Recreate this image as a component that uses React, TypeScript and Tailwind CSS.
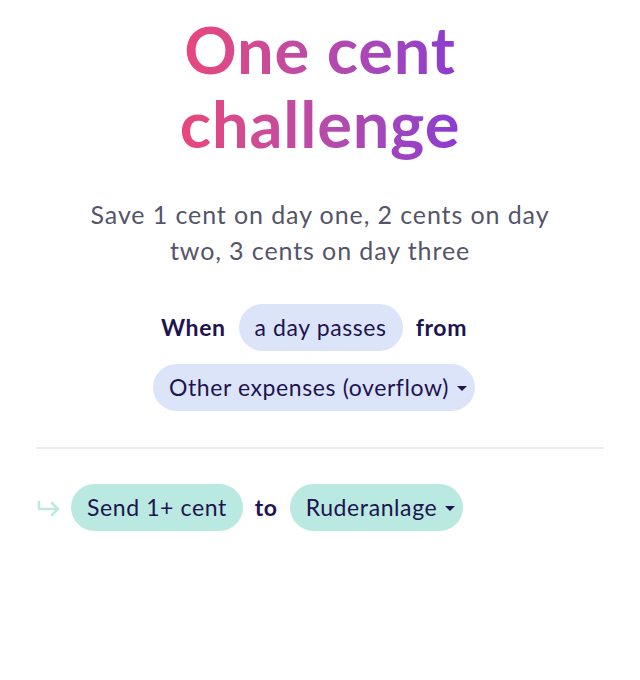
function Caret() {
  return (
    <svg width="10" height="6" viewBox="0 0 10 6" className="ml-2 mt-[2px]">
      <path d="M0 0 L10 0 L5 5 Z" fill="#1e1450" />
    </svg>
  );
}

function FlowArrow() {
  return (
    <svg width="26" height="24" viewBox="0 0 26 24" fill="none" className="-mr-[3px]">
      <path
        d="M3 6v7h19M16 7l6 6-6 6"
        stroke="#bde9e1"
        strokeWidth="2.6"
        strokeLinecap="round"
        strokeLinejoin="round"
      />
    </svg>
  );
}

function Chip({
  children,
  color,
  caret,
}: {
  children: React.ReactNode;
  color: string;
  caret?: boolean;
}) {
  return (
    <span
      className={`inline-flex items-center h-[47px] rounded-full text-[23px] tracking-[0.6px] text-[#1e1450] ${
        caret ? "pl-4 pr-2" : "px-4"
      } ${color}`}
    >
      {children}
      {caret && <Caret />}
    </span>
  );
}

export default function App() {
  return (
    <div
      className="w-[640px] h-[680px] bg-white px-9 pt-[12px]"
      style={{ fontFamily: "Lato, 'Open Sans', sans-serif" }}
    >
      {/* Title */}
      <h1 className="text-center font-bold text-[65px] leading-[74px] tracking-[0.8px]">
        <span className="inline-block bg-gradient-to-r from-[#ec4578] to-[#8a3ad2] bg-clip-text text-transparent px-1">
          One cent
          <br />
          challenge
        </span>
      </h1>

      {/* Description */}
      <p className="mt-[36px] text-center text-[25px] leading-[36px] tracking-[0.9px] text-[#55556a]">
        Save 1 cent on day one, 2 cents on day
        <br />
        two, 3 cents on day three
      </p>

      {/* Trigger */}
      <div className="mt-[36px] mr-[12px] flex flex-col items-center gap-[13px]">
        <div className="flex items-center gap-[13px]">
          <span className="font-bold text-[23px] tracking-[0.6px] text-[#1e1450]">When</span>
          <Chip color="bg-[#dce4fa]">a day passes</Chip>
          <span className="font-bold text-[23px] tracking-[0.6px] text-[#1e1450]">from</span>
        </div>
        <Chip color="bg-[#dce4fa]" caret>
          Other expenses (overflow)
        </Chip>
      </div>

      <div className="mt-[36px] h-[2px] bg-[#eeeef2]" />

      {/* Action */}
      <div className="mt-[35px] flex items-center gap-[12px]">
        <FlowArrow />
        <Chip color="bg-[#b9e9e0]">Send 1+ cent</Chip>
        <span className="font-bold text-[23px] tracking-[0.6px] text-[#1e1450]">to</span>
        <Chip color="bg-[#b9e9e0]" caret>
          Ruderanlage
        </Chip>
      </div>
    </div>
  );
}
